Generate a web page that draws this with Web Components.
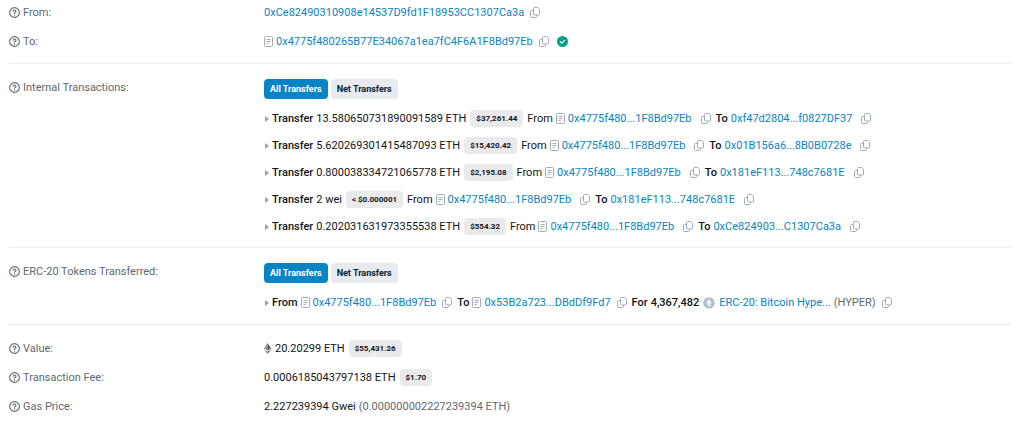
<!DOCTYPE html>
<html lang="en">
<head>
<meta charset="utf-8">
<meta name="viewport" content="width=device-width, initial-scale=1">
<title>Transaction Details</title>
<style>
  :root {
    --clr-text: #101418;
    --clr-muted: #5f6871;
    --clr-link: #0784c3;
    --clr-icon: #a3abb4;
    --clr-badge: #e9eaec;
    --clr-tab: #e7eaee;
    --clr-line: #e9ecef;
    --clr-green: #00a186;
  }

  body {
    margin: 0;
    padding: 4px 13px 4px 9px;
    background: #fff;
    color: var(--clr-text);
    font: 11px/17px Roboto, "Liberation Sans", sans-serif;
  }

  b {
    font-weight: 500;
  }

  .muted {
    color: var(--clr-muted);
  }
</style>
</head>
<body>
  <main>
    <tx-section class="first">
      <tx-row label="From:">
        <tx-line>
          <address-link>0xCe82490310908e14537D9fd1F18953CC1307Ca3a</address-link>
          <copy-button></copy-button>
        </tx-line>
      </tx-row>
      <tx-row label="To:">
        <tx-line>
          <address-link contract>0x4775f480265B77E34067a1ea7fC4F6A1F8Bd97Eb</address-link>
          <copy-button></copy-button>
          <verified-icon></verified-icon>
        </tx-line>
      </tx-row>
    </tx-section>

    <tx-section class="internal">
      <tx-row label="Internal Transactions:">
        <transfer-tabs></transfer-tabs>
        <transfer-item amount="13.580650731890091589 ETH" usd="$37,261.44" from="0x4775f480...1F8Bd97Eb" to="0xf47d2804...f0827DF37"></transfer-item>
        <transfer-item amount="5.620269301415487093 ETH" usd="$15,420.42" from="0x4775f480...1F8Bd97Eb" to="0x01B156a6...8B0B0728e"></transfer-item>
        <transfer-item amount="0.800038334721065778 ETH" usd="$2,195.08" from="0x4775f480...1F8Bd97Eb" to="0x181eF113...748c7681E"></transfer-item>
        <transfer-item amount="2 wei" usd="&lt; $0.000001" from="0x4775f480...1F8Bd97Eb" to="0x181eF113...748c7681E"></transfer-item>
        <transfer-item amount="0.202031631973355538 ETH" usd="$554.32" from="0x4775f480...1F8Bd97Eb" to="0xCe824903...C1307Ca3a"></transfer-item>
      </tx-row>
    </tx-section>

    <tx-section>
      <tx-row label="ERC-20 Tokens Transferred:">
        <transfer-tabs></transfer-tabs>
        <tx-line caret>
          <b>From</b>
          <address-link contract>0x4775f480...1F8Bd97Eb</address-link>
          <copy-button></copy-button>
          <b>To</b>
          <address-link contract>0x53B2a723...DBdDf9Fd7</address-link>
          <copy-button></copy-button>
          <b>For</b>
          <b>4,367,482</b>
          <token-icon></token-icon>
          <address-link>ERC-20: Bitcoin Hype...</address-link>
          <span class="muted">(HYPER)</span>
          <copy-button></copy-button>
        </tx-line>
      </tx-row>
    </tx-section>

    <tx-section last>
      <tx-row label="Value:">
        <tx-line>
          <eth-icon></eth-icon>
          <span>20.20299 ETH</span>
          <usd-badge>$55,431.26</usd-badge>
        </tx-line>
      </tx-row>
      <tx-row label="Transaction Fee:">
        <tx-line>
          <span>0.0006185043797138 ETH</span>
          <usd-badge>$1.70</usd-badge>
        </tx-line>
      </tx-row>
      <tx-row label="Gas Price:">
        <tx-line>
          <span>2.227239394 Gwei</span>
          <span class="muted">(0.000000002227239394 ETH)</span>
        </tx-line>
      </tx-row>
    </tx-section>
  </main>

<script>
  class TxElement extends HTMLElement {
    constructor() {
      super();
      this.attachShadow({ mode: "open" });
    }

    connectedCallback() {
      this.shadowRoot.innerHTML = this.template();
    }
  }

  class TxSection extends TxElement {
    template() {
      return `
        <style>
          :host {
            display: flex;
            flex-direction: column;
            gap: 12px;
            padding: 15px 0 13px;
            border-bottom: 1px solid var(--clr-line);
          }

          :host(.first) { padding-top: 0; }
          :host(.internal) { padding-bottom: 12px; }
          :host([last]) { border-bottom: 0; }
        </style>
        <slot></slot>
      `;
    }
  }

  class TxRow extends TxElement {
    template() {
      return `
        <style>
          :host {
            display: grid;
            grid-template-columns: minmax(0, 1fr) minmax(0, 3fr);
            column-gap: 6px;
          }

          .label {
            display: flex;
            align-items: center;
            align-self: start;
            gap: 3px;
            color: var(--clr-muted);
          }

          .value {
            display: flex;
            flex-direction: column;
            gap: 10px;
          }

          svg { flex: none; }
        </style>
        <div class="label" id="label">
          <svg width="11" height="11" viewBox="0 0 16 16" fill="none" stroke="currentColor" stroke-width="1.6" stroke-linecap="round" stroke-linejoin="round" aria-hidden="true">
            <circle cx="8" cy="8" r="7.1"/>
            <path d="M5.9 6.2C5.9 5 6.8 4.3 8 4.3s2.2.8 2.2 1.9c0 1.4-2.1 1.6-2.1 2.8"/>
            <path d="M8.1 11.4v.2" stroke-width="1.9"/>
          </svg>
          <span>${this.getAttribute("label")}</span>
        </div>
        <div class="value" role="group" aria-labelledby="label"><slot></slot></div>
      `;
    }
  }

  class TxLine extends TxElement {
    template() {
      return `
        <style>
          :host {
            display: flex;
            flex-wrap: wrap;
            align-items: center;
            gap: 3px;
          }

          svg { flex: none; margin-left: 1px; }
        </style>
        ${this.hasAttribute("caret") ? `
          <svg width="4" height="6" viewBox="0 0 4 6" fill="#9aa2ab" aria-hidden="true"><path d="M0 0l4 3-4 3z"/></svg>
        ` : ""}
        <slot></slot>
      `;
    }
  }

  class AddressLink extends TxElement {
    template() {
      return `
        <style>
          :host {
            display: inline-flex;
            align-items: center;
            gap: 3px;
          }

          a {
            color: var(--clr-link);
            text-decoration: none;
          }

          svg { flex: none; }
        </style>
        ${this.hasAttribute("contract") ? `
          <svg width="9" height="11" viewBox="0 0 9 11" fill="none" stroke="var(--clr-icon)" aria-hidden="true">
            <rect x=".5" y=".5" width="8" height="10" rx="1"/>
            <path d="M2.5 3.5h4M2.5 5.5h4M2.5 7.5h2"/>
          </svg>
        ` : ""}
        <a href="#"><slot></slot></a>
      `;
    }
  }

  class CopyButton extends TxElement {
    template() {
      return `
        <style>
          :host {
            display: inline-flex;
            margin: 0 2px 0 var(--copy-space, 3px);
          }

          button {
            display: flex;
            padding: 0;
            border: 0;
            background: none;
            color: var(--clr-icon);
            cursor: pointer;
          }
        </style>
        <button type="button" aria-label="Copy">
          <svg width="10" height="11" viewBox="0 0 10 11" fill="none" stroke="currentColor" stroke-linejoin="round">
            <path d="M4.5.5h3.3l1.7 1.7v4.8a1 1 0 0 1-1 1h-4a1 1 0 0 1-1-1V1.5a1 1 0 0 1 1-1z"/>
            <path d="M3.5 3.5h-2a1 1 0 0 0-1 1v5a1 1 0 0 0 1 1h4a1 1 0 0 0 1-1V8"/>
          </svg>
        </button>
      `;
    }
  }

  class UsdBadge extends TxElement {
    template() {
      return `
        <style>
          :host {
            display: inline-block;
            margin: 0 1px;
            padding: 0 6px;
            border-radius: 4px;
            background: var(--clr-badge);
            font-size: 8px;
            font-weight: 700;
          }
        </style>
        <slot></slot>
      `;
    }
  }

  class TransferTabs extends TxElement {
    template() {
      return `
        <style>
          :host {
            display: flex;
            gap: 3px;
            margin-bottom: 1px;
          }

          button {
            padding: 0 6px;
            border: 0;
            border-radius: 4px;
            background: var(--clr-tab);
            color: #081d35;
            font: 700 9px/20px Roboto, "Liberation Sans", sans-serif;
            cursor: pointer;
          }

          button[aria-pressed="true"] {
            background: var(--clr-link);
            color: #fff;
          }
        </style>
        <button type="button" aria-pressed="true">All Transfers</button>
        <button type="button" aria-pressed="false">Net Transfers</button>
      `;
    }
  }

  class TransferItem extends TxElement {
    template() {
      const usd = this.getAttribute("usd").replace("<", "&lt;");

      return `
        <style>
          :host {
            display: block;
            --copy-space: 6px;
          }

          b { font-weight: 500; }
        </style>
        <tx-line caret>
          <b>Transfer</b>
          <span>${this.getAttribute("amount")}</span>
          <usd-badge>${usd}</usd-badge>
          <span>From</span>
          <address-link contract>${this.getAttribute("from")}</address-link>
          <copy-button></copy-button>
          <b>To</b>
          <address-link>${this.getAttribute("to")}</address-link>
          <copy-button></copy-button>
        </tx-line>
      `;
    }
  }

  class VerifiedIcon extends TxElement {
    template() {
      return `
        <style>
          :host { display: inline-flex; margin-left: 3px; }
        </style>
        <svg width="11" height="11" viewBox="0 0 11 11" role="img" aria-label="Verified">
          <circle cx="5.5" cy="5.5" r="5.5" fill="var(--clr-green)"/>
          <path d="M3.4 5.7l1.5 1.4 2.7-2.8" fill="none" stroke="#fff" stroke-width="1.2" stroke-linecap="round" stroke-linejoin="round"/>
        </svg>
      `;
    }
  }

  class TokenIcon extends TxElement {
    template() {
      return `
        <style>
          :host { display: inline-flex; margin: 0 1px; }
        </style>
        <svg width="12" height="12" viewBox="0 0 12 12" aria-hidden="true">
          <circle cx="6" cy="6" r="5.8" fill="#b3bfce"/>
          <path d="M6 1.6l2.5 4.5L6 10.2 3.5 6.1z" fill="#f4f6f9"/>
          <path d="M3.5 6.1L6 7.5l2.5-1.4" fill="none" stroke="#b3bfce" stroke-width=".5"/>
        </svg>
      `;
    }
  }

  class EthIcon extends TxElement {
    template() {
      return `
        <style>
          :host { display: inline-flex; margin-right: 1px; }
        </style>
        <svg width="7" height="11" viewBox="0 0 7 11" aria-hidden="true">
          <path d="M3.5 0L0 5.6l3.5 2z" fill="#8a8f98"/>
          <path d="M3.5 0L7 5.6l-3.5 2z" fill="#50565f"/>
          <path d="M0 6.4l3.5 2V11z" fill="#8a8f98"/>
          <path d="M7 6.4l-3.5 2V11z" fill="#50565f"/>
        </svg>
      `;
    }
  }

  customElements.define("tx-section", TxSection);
  customElements.define("tx-row", TxRow);
  customElements.define("tx-line", TxLine);
  customElements.define("address-link", AddressLink);
  customElements.define("copy-button", CopyButton);
  customElements.define("usd-badge", UsdBadge);
  customElements.define("transfer-tabs", TransferTabs);
  customElements.define("transfer-item", TransferItem);
  customElements.define("verified-icon", VerifiedIcon);
  customElements.define("token-icon", TokenIcon);
  customElements.define("eth-icon", EthIcon);
</script>
</body>
</html>
